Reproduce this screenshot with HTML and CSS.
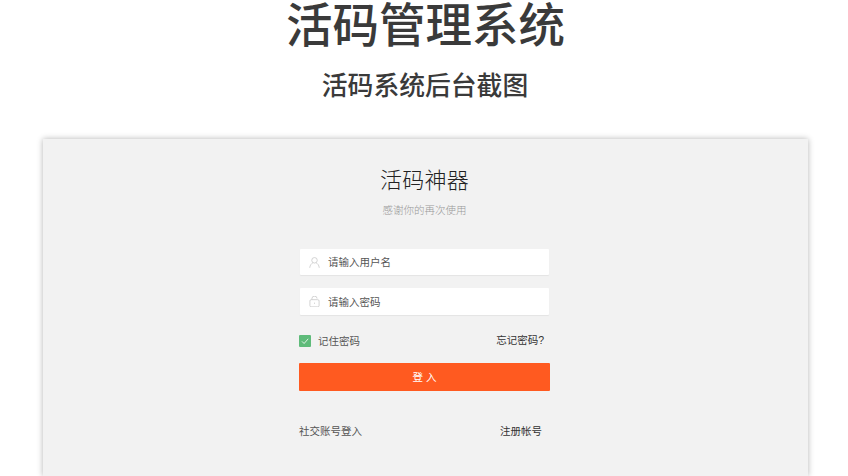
FILE: index.html
```html
<!DOCTYPE html>
<html lang="zh-CN">
<head>
    <meta charset="UTF-8">
    <meta name="viewport" content="width=device-width, initial-scale=1.0">
    <title>活码管理系统</title>
    <link rel="stylesheet" href="styles.css">
</head>
<body>

<h1 class="page-title">活码管理系统</h1>
<h2 class="page-subtitle">活码系统后台截图</h2>

<div class="shot">
    <h3 class="login-title">活码神器</h3>
    <p class="login-note">感谢你的再次使用</p>

    <form class="login-form">
        <label class="field field-user">
            <svg class="field-icon" viewBox="0 0 12 12" width="11" height="11">
                <circle cx="6" cy="3.6" r="3"/>
                <path d="M.8 11.8c.3-3 2-4.8 3.3-5.3M11.2 11.8c-.3-3-2-4.8-3.3-5.3"/>
            </svg>
            <input type="text" placeholder="请输入用户名">
        </label>
        <label class="field">
            <svg class="field-icon" viewBox="0 0 12 12" width="11" height="11">
                <rect x="1" y="4" width="10" height="7.8" rx="1.4"/>
                <path d="M3.2 4V2.8a2.8 2.6 0 0 1 5.6 0"/>
                <path d="M6 7.2v1.4"/>
            </svg>
            <input type="password" placeholder="请输入密码">
        </label>

        <div class="row-remember">
            <span class="remember">
                <span class="checkbox">
                    <svg viewBox="0 0 12 12" width="12" height="12"><path d="M3 6.4l2.1 2.1L9.2 3.8"/></svg>
                </span>
                记住密码
            </span>
            <a class="forgot" href="#">忘记密码?</a>
        </div>

        <button class="login-btn" type="button">登 入</button>

        <div class="row-links">
            <span class="social">社交账号登入</span>
            <a class="register" href="#">注册帐号</a>
        </div>
    </form>
</div>

</body>
</html>
```

FILE: styles.css
```css
body {
    margin: 0;
    height: 476px;
    overflow: hidden;
    background-color: #fff;
    font-family: "Liberation Sans", "Noto Sans CJK SC", sans-serif;
    color: #333;
    text-align: center;
}
.page-title {
    margin: 0;
    padding-left: 3px;
    height: 53px;
    font-size: 46.5px;
    line-height: 53px;
    font-weight: 500;
    color: #3a3a3a;
}
.page-subtitle {
    margin: 15px 0 0;
    padding-left: 2px;
    height: 36px;
    font-size: 25.8px;
    line-height: 36px;
    font-weight: 500;
    color: #3a3a3a;
}
.shot {
    margin: 35px 40px 0 43px;
    height: 337px;
    padding: 28px 2px 0 0;
    box-sizing: border-box;
    background-color: #f2f2f2;
    box-shadow: 0 0 6px rgba(0, 0, 0, 0.3);
}
.login-title {
    margin: 0;
    font-size: 22px;
    line-height: 27px;
    font-weight: 300;
    letter-spacing: 0.3px;
    color: #222;
}
.login-note {
    margin: 8px 0 0;
    font-size: 10.5px;
    line-height: 16px;
    font-weight: 300;
    color: #999;
}
.login-form {
    width: 251px;
    margin: 31px 0 0 256px;
}
.field {
    display: flex;
    align-items: center;
    height: 27px;
    margin: 0 1px 12px;
    padding-left: 9px;
    background-color: #fff;
    border-radius: 1px;
    box-shadow: 0 1px 1px rgba(0, 0, 0, 0.06);
}
.field-user {
    height: 26px;
    margin-bottom: 13px;
}
.field-icon {
    flex: none;
    fill: none;
    stroke: #c4c4c4;
    stroke-width: 0.8;
}
.field input {
    flex: 1;
    min-width: 0;
    margin-left: 8px;
    padding: 0;
    border: none;
    outline: none;
    background: transparent;
    font-family: inherit;
    font-size: 10.5px;
    color: #555;
}
.field input::placeholder {
    color: #555;
    opacity: 1;
}
.row-remember {
    display: flex;
    justify-content: space-between;
    align-items: center;
    height: 21px;
    margin-top: 15px;
    padding-right: 6px;
    font-size: 10.5px;
}
.remember {
    display: flex;
    align-items: center;
    gap: 7px;
    color: #555;
}
.checkbox {
    display: block;
    width: 12px;
    height: 12px;
    background-color: #5fbb7a;
    border-radius: 1px;
}
.checkbox svg {
    display: block;
    fill: none;
    stroke: #fff;
    stroke-width: 0.8;
}
.forgot, .register {
    color: #333;
    text-decoration: none;
}
.forgot {
    margin-bottom: 3px;
}
.login-btn {
    display: block;
    width: 100%;
    height: 28px;
    margin-top: 12px;
    padding: 0 0 2px;
    border: none;
    border-radius: 1px;
    background-color: #ff5a20;
    color: #fff;
    font-family: inherit;
    font-size: 10.5px;
    cursor: pointer;
}
.row-links {
    display: flex;
    justify-content: space-between;
    margin-top: 32px;
    padding-right: 8px;
    font-size: 10.5px;
    line-height: 16px;
}
.social {
    color: #555;
}
```
